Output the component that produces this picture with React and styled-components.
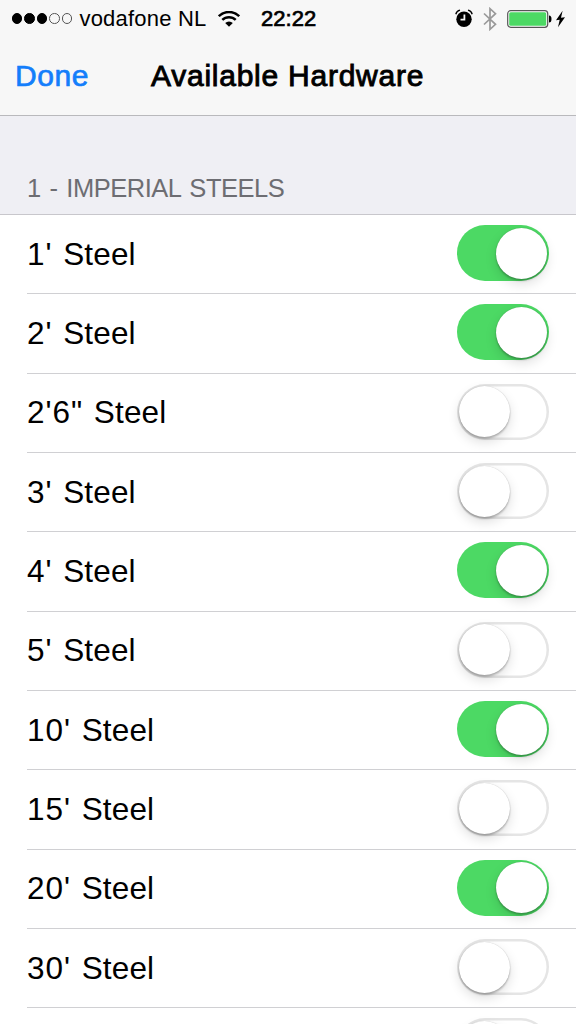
import React, { useState } from "react";
import styled, { createGlobalStyle } from "styled-components";

const GlobalStyle = createGlobalStyle`
  * {
    box-sizing: border-box;
  }

  body {
    margin: 0;
    background: #fff;
    font-family: "Liberation Sans", Arial, sans-serif;
    color: #000;
  }
`;

const Screen = styled.div`
  width: 576px;
  height: 1024px;
  overflow: hidden;
  background: #fff;
`;

const Header = styled.header`
  height: 116px;
  background: #f7f7f7;
  border-bottom: 1.5px solid #b9b9bc;
`;

const StatusBar = styled.div`
  height: 37px;
  display: flex;
  align-items: center;
  padding: 0 11px 0 11.5px;
`;

const Signal = styled.div`
  display: flex;
  gap: 2px;
  margin-right: 7px;
`;

const Dot = styled.span`
  width: 10.6px;
  height: 10.6px;
  border-radius: 50%;
  border: 1px solid ${(props) => (props.$filled ? "#000" : "#555")};
  background: ${(props) => (props.$filled ? "#000" : "transparent")};
`;

const Carrier = styled.span`
  width: 127px;
  font-size: 22px;
  letter-spacing: 0.2px;
  white-space: nowrap;
  margin-right: 11.5px;
`;

const Clock = styled.span`
  margin-left: 21px;
  font-size: 22px;
  letter-spacing: 0.05px;
  -webkit-text-stroke: 0.7px #000;
`;

const StatusIcons = styled.div`
  margin-left: auto;
  display: flex;
  align-items: center;
  gap: 10px;
`;

const Power = styled.div`
  display: flex;
  align-items: center;
  gap: 4px;
`;

const NavBar = styled.nav`
  height: 78px;
  display: grid;
  grid-template-columns: 151px 1fr;
  align-items: center;
`;

const DoneButton = styled.button`
  justify-self: start;
  margin: 0;
  padding: 0 0 0 15px;
  border: none;
  background: none;
  font: inherit;
  font-size: 30px;
  letter-spacing: 0.6px;
  color: #147efb;
  -webkit-text-stroke: 0.7px #147efb;
`;

const Title = styled.h1`
  margin: 0;
  font-size: 30px;
  font-weight: normal;
  letter-spacing: 0.75px;
  white-space: nowrap;
  -webkit-text-stroke: 0.9px #000;
`;

const SectionHeader = styled.h2`
  height: 99px;
  margin: 0;
  padding: 0 27px 11px;
  display: flex;
  align-items: flex-end;
  background: #efeff4;
  border-bottom: 1px solid #c8c7cc;
  font-size: 25.5px;
  line-height: 30px;
  letter-spacing: -0.48px;
  word-spacing: 2.2px;
  font-weight: normal;
  color: #6d6d72;
`;

const Row = styled.div`
  height: 79.33px;
  margin-left: 27px;
  padding-right: 27px;
  display: flex;
  align-items: center;
  justify-content: space-between;
  border-bottom: 1px solid #d0d0d3;
`;

const Label = styled.span`
  font-size: 31.5px;
  letter-spacing: 0.15px;
  word-spacing: 1.7px;
  white-space: nowrap;
`;

const Size = styled.span`
  letter-spacing: 1px;
`;

const Track = styled.button`
  width: 92px;
  height: 56px;
  margin: 0 0 2px;
  padding: 0 2px;
  display: flex;
  flex: none;
  align-items: center;
  justify-content: ${(props) => (props.$on ? "flex-end" : "flex-start")};
  border: none;
  border-radius: 28px;
  background: ${(props) => (props.$on ? "#4cd964" : "#fff")};
  box-shadow: ${(props) => (props.$on ? "none" : "inset 0 0 0 2.5px #e5e5e5")};
`;

const Knob = styled.span`
  width: 51px;
  height: 51px;
  border-radius: 50%;
  background: #fff;
  box-shadow: 0 0 1px rgba(0, 0, 0, 0.25), 0 2px 2px rgba(0, 0, 0, 0.22),
    0 5px 12px rgba(0, 0, 0, 0.13);
`;

const hardware = [
  { size: "1'", on: true },
  { size: "2'", on: true },
  { size: "2'6\"", on: false },
  { size: "3'", on: false },
  { size: "4'", on: true },
  { size: "5'", on: false },
  { size: "10'", on: true },
  { size: "15'", on: false },
  { size: "20'", on: true },
  { size: "30'", on: false },
  { size: "", on: false },
];

const WifiIcon = () => (
  <svg width="22" height="16" viewBox="0 0 22 16" fill="none" stroke="#000">
    <path d="M.8 5.2a14.5 14.5 0 0 1 20.4 0" strokeWidth="2.5" />
    <path d="M4.3 8.9a9.5 9.5 0 0 1 13.4 0" strokeWidth="2.5" />
    <path d="M11 15.8 7.2 12.1a5.3 5.3 0 0 1 7.6 0Z" fill="#000" stroke="none" />
  </svg>
);

const AlarmIcon = () => (
  <svg width="18" height="19" viewBox="0 0 18 19" fill="none">
    <circle cx="9" cy="10.3" r="7.7" fill="#000" />
    <path
      d="M.8 5.2Q1.7 2 5 1.2M17.2 5.2Q16.3 2 13 1.2"
      stroke="#000"
      strokeWidth="1.3"
    />
    <path d="M9.4 5.5v5.2H5.5" stroke="#f7f7f7" strokeWidth="1.8" />
  </svg>
);

const BluetoothIcon = () => (
  <svg width="14" height="24" viewBox="0 0 14 24" fill="none">
    <path
      d="M1 6.5 12.5 17.3 7 22.3V1.7l5.5 5L1 17.5"
      stroke="#999"
      strokeWidth="1.7"
    />
  </svg>
);

const BatteryIcon = () => (
  <svg width="45" height="18" viewBox="0 0 45 18">
    <rect x=".7" y=".7" width="40" height="16.6" rx="3" fill="#fff" stroke="#555" strokeWidth="1.2" />
    <rect x="2.2" y="2.2" width="37" height="13.6" rx="1.5" fill="#4cd964" />
    <path d="M42 5.5q2.5 0 2.5 3.5T42 12.5Z" fill="#000" />
  </svg>
);

const BoltIcon = () => (
  <svg width="9" height="18" viewBox="0 0 9 18">
    <path d="M6.6.8 0 10.2l3.700-.4L2 17.200 9 7.200l-4 .5Z" fill="#000" />
  </svg>
);

const Switch = ({ on, onToggle }) => (
  <Track type="button" role="switch" aria-checked={on} $on={on} onClick={onToggle}>
    <Knob />
  </Track>
);

const App = () => {
  const [items, setItems] = useState(hardware);

  const toggle = (index) => {
    setItems(
      items.map((item, i) => (i === index ? { ...item, on: !item.on } : item))
    );
  };

  return (
    <Screen>
      <GlobalStyle />
      <Header>
        <StatusBar>
          <Signal>
            {[1, 2, 3, 4, 5].map((n) => (
              <Dot key={n} $filled={n <= 3} />
            ))}
          </Signal>
          <Carrier>vodafone NL</Carrier>
          <WifiIcon />
          <Clock>22:22</Clock>
          <StatusIcons>
            <AlarmIcon />
            <BluetoothIcon />
            <Power>
              <BatteryIcon />
              <BoltIcon />
            </Power>
          </StatusIcons>
        </StatusBar>
        <NavBar>
          <DoneButton type="button">Done</DoneButton>
          <Title>Available Hardware</Title>
        </NavBar>
      </Header>
      <SectionHeader>1 - IMPERIAL STEELS</SectionHeader>
      {items.map((item, index) => (
        <Row key={index}>
          <Label>
            {item.size ? (
              <>
                <Size>{item.size}</Size> Steel
              </>
            ) : null}
          </Label>
          <Switch on={item.on} onToggle={() => toggle(index)} />
        </Row>
      ))}
    </Screen>
  );
};

export default App;
